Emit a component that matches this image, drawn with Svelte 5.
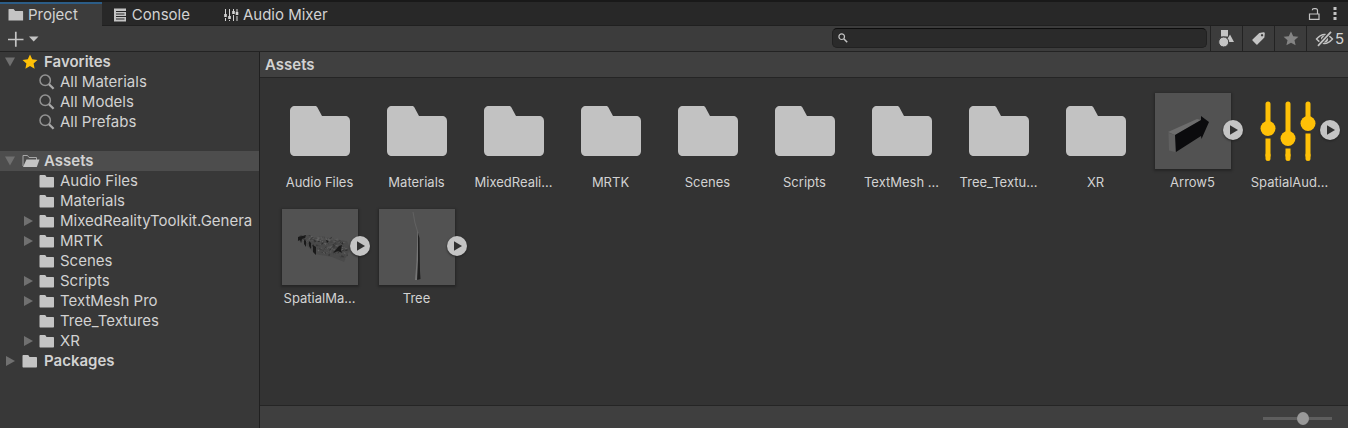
<script>
  const favorites = ['All Materials', 'All Models', 'All Prefabs'];
  const folders = [
    { name: 'Audio Files' },
    { name: 'Materials' },
    { name: 'MixedRealityToolkit.Genera', children: true },
    { name: 'MRTK', children: true },
    { name: 'Scenes' },
    { name: 'Scripts', children: true },
    { name: 'TextMesh Pro', children: true },
    { name: 'Tree_Textures' },
    { name: 'XR', children: true }
  ];
  const assets = [
    { label: 'Audio Files', kind: 'folder' },
    { label: 'Materials', kind: 'folder' },
    { label: 'MixedReali...', kind: 'folder' },
    { label: 'MRTK', kind: 'folder' },
    { label: 'Scenes', kind: 'folder' },
    { label: 'Scripts', kind: 'folder' },
    { label: 'TextMesh ...', kind: 'folder' },
    { label: 'Tree_Textu...', kind: 'folder' },
    { label: 'XR', kind: 'folder' },
    { label: 'Arrow5', kind: 'arrow' },
    { label: 'SpatialAud...', kind: 'mixer' },
    { label: 'SpatialMa...', kind: 'mesh' },
    { label: 'Tree', kind: 'tree' }
  ];

  // Triangulated rubble for the scanned-mesh preview, from a fixed seed.
  let seed = 7;
  const rnd = () => (seed = (seed * 16807) % 2147483647) / 2147483647;
  const shades = ['#2e2e2e', '#404040', '#5e5e5e', '#6a6a6a', '#222', '#707070', '#444'];
  const shards = Array.from({ length: 330 }, () => {
    const t = rnd();
    const x = 17 + t * 48;
    const y = 29 + t * 13 + (rnd() - 0.5) * (5 + Math.min(t * 2, 1) * 13);
    const p = () => `${(x + rnd() * 4 - 2).toFixed(1)},${(y + rnd() * 3 - 1.5).toFixed(1)}`;
    return { points: `${p()} ${p()} ${p()}`, fill: shades[Math.floor(rnd() * shades.length)] };
  });

  let query = $state('');
  let zoom = $state(60);
</script>

{#snippet smallFolder()}
  <svg class="icon" width="16" height="16" viewBox="0 0 16 16" aria-hidden="true">
    <path fill="#c4c4c4" d="M1.5 2h4.2c.5 0 .8.2 1 .6L7.5 4H14c.6 0 1 .4 1 1v8.500c0 .6-.4 1-1 1H1.500c-.6 0-1-.4-1-1V3c0-.6.4-1 1-1z" />
  </svg>
{/snippet}

{#snippet lens()}
  <svg class="icon" width="16" height="16" viewBox="0 0 16 16" aria-hidden="true">
    <circle cx="6.200" cy="6.300" r="5.200" fill="none" stroke="#929292" stroke-width="1.500" />
    <path d="M10 10.200l4.600 4.600" stroke="#aaa" stroke-width="2.300" />
  </svg>
{/snippet}

{#snippet fold(open)}
  <svg class="fold" width="10" height="10" viewBox="0 0 10 10" aria-hidden="true">
    <path fill="#707070" d={open ? 'M0 .5h10L5 9.500z' : 'M1 0v10L10 5z'} />
  </svg>
{/snippet}

<main class="window">
  <div class="tabs">
    <button class="tab active">
      <svg width="16" height="16" viewBox="0 0 16 16" aria-hidden="true"><path fill="#c4c4c4" d="M1 2h4.600l1.600 2H14.600c.3 0 .5.2.5.5v9H.5v-11c0-.3.2-.5.5-.5z" /></svg>
      Project
    </button>
    <button class="tab">
      <svg width="16" height="16" viewBox="0 0 16 16" aria-hidden="true"><rect x="2" y="1.500" width="12" height="13" fill="#c4c4c4" /><path stroke="#282828" d="M4 4.500h10M4 7h8.500M4 9.500h10M4 12h8.500" /></svg>
      Console
    </button>
    <button class="tab">
      <svg width="16" height="16" viewBox="0 0 16 16" aria-hidden="true"><path stroke="#d2d2d2" d="M2.500 2v5M2.500 11v3M6.500 2v7M6.500 13v1M10.500 2v2M10.500 8v6M14 2v3M14 9v5" /><path stroke="#d2d2d2" stroke-width="2.600" d="M2.500 7v3M6.500 9v3M10.500 4v3M14 5v3" /></svg>
      Audio Mixer
    </button>
    <div class="window-tools">
      <button class="plain" aria-label="Lock">
        <svg width="14" height="14" viewBox="0 0 14 14" aria-hidden="true"><path fill="none" stroke="#c4c4c4" stroke-width="1.200" d="M1.500 7h9.500v5.400H1.500zM9.500 7V3.500Q9.500 1.600 7.500 1.600H6Q4.300 1.600 4.300 3.200" /></svg>
      </button>
      <button class="plain" aria-label="More">
        <svg width="6" height="14" viewBox="0 0 6 14" aria-hidden="true"><path fill="#c4c4c4" d="M1.500 0h3v3h-3zM1.500 5h3v3h-3zM1.500 10h3v3h-3z" /></svg>
      </button>
    </div>
  </div>

  <div class="toolbar">
    <button class="plain create" aria-label="Create">
      <svg width="32" height="16" viewBox="0 0 32 16" aria-hidden="true"><path stroke="#c4c4c4" stroke-width="1.700" d="M0 8.500h15.500M7.800.8v15" /><path fill="#c4c4c4" d="M21 5.500h9.500L25.700 10.500z" /></svg>
    </button>
    <label class="search">
      <svg width="10" height="10" viewBox="0 0 10 10" aria-hidden="true"><circle cx="3.700" cy="3.700" r="2.800" fill="none" stroke="#c4c4c4" stroke-width="1.200" /><path d="M5.700 5.700l3.500 3.500" stroke="#c4c4c4" stroke-width="1.500" /></svg>
      <input type="text" aria-label="Search assets" bind:value={query} />
    </label>
    <div class="filters">
      <button class="filter" aria-label="Search by type">
        <svg width="18" height="18" viewBox="0 0 18 18" aria-hidden="true"><path fill="#c4c4c4" d="M3 0h7v6.500H3zM12 4.500l4 7.500h-5L9.500 8.800z" /><circle cx="5.700" cy="12" r="5" fill="#c4c4c4" stroke="#3c3c3c" /></svg>
      </button>
      <button class="filter" aria-label="Search by label">
        <svg width="16" height="16" viewBox="0 0 16 16" aria-hidden="true"><path fill="#c4c4c4" fill-rule="evenodd" d="M8.300 2l4.200-.8c.7 0 1.300.5 1.300 1.200l-.4 4-7 7q-.5.5-1 0L1.500 9.500q-.5-.5 0-1zM11 3a1.200 1.200 0 1 0 .1 0z" /></svg>
      </button>
      <button class="filter" aria-label="Save search">
        <svg width="16" height="16" viewBox="0 0 16 16" aria-hidden="true"><path fill="#848484" d="M8 .4l2.200 4.800 5.200.5-3.900 3.500 1.100 5.100L8 11.700l-4.600 2.600 1.100-5.100L.6 5.700l5.200-.5z" /></svg>
      </button>
      <button class="filter hidden-count" aria-label="Hidden packages: 5">
        <svg width="20" height="16" viewBox="0 0 20 16" aria-hidden="true"><path fill="none" stroke="#c4c4c4" stroke-width="1.400" d="M1.500 8Q5.500 3.500 9.500 3.500T17.500 8Q13.500 12.500 9.500 12.500T1.500 8z" /><circle cx="9.500" cy="8" r="3.600" fill="#c4c4c4" /><path stroke="#3c3c3c" stroke-width="4" d="M3.500 14.500L15.500 1" /><path stroke="#c4c4c4" stroke-width="1.700" d="M3 14.800L16 .8" /></svg>
        <span>5</span>
      </button>
    </div>
  </div>

  <div class="body">
    <nav class="sidebar" aria-label="Project folders">
      <button class="row root">
        {@render fold(true)}
        <svg class="icon" width="16" height="16" viewBox="0 0 16 16" aria-hidden="true"><path fill="#ffc107" d="M8 .5l2.200 4.800 5.300.6-3.900 3.600 1 5.200L8 12.100l-4.600 2.600 1-5.200L.5 5.900l5.300-.6z" /></svg>
        <span>Favorites</span>
      </button>
      {#each favorites as name}
        <button class="row child"><span class="fold"></span>{@render lens()}<span>{name}</span></button>
      {/each}

      <button class="row root selected">
        {@render fold(true)}
        <svg class="icon wide" width="18" height="16" viewBox="0 0 18 16" aria-hidden="true"><path fill="none" stroke="#a8a8a8" d="M1 13V2.500h4.500L7 4.500h7.500V7" /><path fill="#c4c4c4" d="M4.500 6.500H17.500L14.800 14H1z" /></svg>
        <span>Assets</span>
      </button>
      {#each folders as f}
        <button class="row child">
          {#if f.children}{@render fold(false)}{:else}<span class="fold"></span>{/if}
          {@render smallFolder()}<span>{f.name}</span>
        </button>
      {/each}
      <button class="row root">{@render fold(false)}{@render smallFolder()}<span>Packages</span></button>
    </nav>

    <section class="browser">
      <h1>Assets</h1>
      <div class="grid">
        {#each assets as a}
          <button class="asset">
            <span class="thumb" class:preview={['arrow', 'mesh', 'tree'].includes(a.kind)}>
              <svg width="76" height="76" viewBox="0 0 76 76" aria-hidden="true">
                {#if a.kind === 'folder'}
                  <path fill="#c2c2c2" d="M13 13h20c1 0 1.700.3 2.300 1.200L40 23h23c3 0 5 2 5 5v30c0 3-2 5-5 5H13c-3 0-5-2-5-5V18c0-3 2-5 5-5z" />
                {:else if a.kind === 'arrow'}
                  <path fill="#6d6d6d" d="M13 39L42 26l4 1-26 15z" />
                  <path fill="#606060" d="M13.500 40l6.500 2v17l-6-1.500z" />
                  <path fill="#0b0b0d" d="M20 42l26-15V23l8 6-7.500 17-.5-3L21 59z" />
                {:else if a.kind === 'mixer'}
                  <g stroke="#ffc107" stroke-width="5" stroke-linecap="round">
                    <path d="M16 11v20M36 11v30M56 11v14" />
                    <path stroke-linecap="butt" d="M16 45.500v18M36 55.500v8M56 40.500v23" />
                    <path d="M16 62v3.500M36 62v3.500M56 62v3.500" />
                  </g>
                  <g fill="#ffc107"><circle cx="16" cy="35.500" r="7.500" /><circle cx="36" cy="45.500" r="7.500" /><circle cx="56" cy="30.500" r="7.500" /></g>
                {:else if a.kind === 'mesh'}
                  <path fill="#4a4a4a" d="M17 28l7-2 19 5 22 1 3 8-6 13-12-5-17-3-8-8z" />
                  <g opacity=".75">
                    {#each shards as s}<polygon points={s.points} fill={s.fill} />{/each}
                  </g>
                  <path fill="#1a1a1a" d="M16 28l8-2-1 3-3 1-1 4-1-3-2 1zM22 31l2 1v6l-2-3zM27 32l2 2v6l-2-3zM31 36l3 2v8l-3-3zM51 44l6-7 3-1-1 5 1 3-4-2zM44 31l3 1-2 2z" />
                {:else}
                  <path fill="none" stroke="#666" stroke-width=".8" d="M34 3l2 11 3 10" />
                  <path fill="#757575" d="M38.500 22l.7 3L39 71h-3l1.500-18z" />
                  <path fill="#202020" d="M39 24l1.500 5 .5 33 .5 8-3.500 1 1-20z" />
                {/if}
              </svg>
              {#if a.kind !== 'folder'}
                <svg class="badge" width="20" height="20" viewBox="0 0 20 20" aria-hidden="true"><circle cx="10" cy="10" r="10" fill="#c4c4c4" /><path fill="#303030" d="M7 5.200v9.600L15 10z" /></svg>
              {/if}
            </span>
            <span class="label">{a.label}</span>
          </button>
        {/each}
      </div>
      <footer>
        <input type="range" min="0" max="100" aria-label="Icon size" bind:value={zoom} />
      </footer>
    </section>
  </div>
</main>

<style>
  :global(body) { margin: 0; background: #383838; }
  .window {
    display: flex;
    flex-direction: column;
    box-sizing: border-box;
    min-height: 100vh;
    border-top: 2px solid #191919;
    background: #383838;
    color: #d2d2d2;
    font: 15px/20px Inter, sans-serif;
  }
  button, input { font: inherit; color: inherit; }
  button { border: 0; margin: 0; padding: 0; background: none; }
  svg { display: block; flex: none; }

  .tabs { display: flex; height: 24px; background: #282828; }
  .tab {
    display: flex;
    align-items: center;
    gap: 4px;
    padding: 2px 23px 0 10px;
    border-bottom: 1px solid #202020;
  }
  .tab.active {
    padding: 0 24px 0 8px;
    background: #3c3c3c;
    border-top: 2px solid #2c5d87;
    border-bottom: 0;
  }
  .window-tools {
    display: flex;
    flex: 1;
    align-items: center;
    justify-content: flex-end;
    gap: 10px;
    padding-right: 10px;
    border-bottom: 1px solid #202020;
  }

  .toolbar { display: flex; height: 25px; background: #3c3c3c; border-bottom: 1px solid #232323; }
  .create { padding-left: 8px; margin-right: auto; }
  .search {
    display: flex;
    align-items: center;
    box-sizing: border-box;
    width: 375px;
    height: 20px;
    margin: 2px 3px 0 0;
    padding-left: 5px;
    gap: 4px;
    border: 1px solid #212121;
    border-top-color: #0d0d0d;
    border-radius: 5px;
    background: #2a2a2a;
  }
  .search input { flex: 1; min-width: 0; border: 0; padding: 0; background: none; outline: 0; height: 16px; }
  .filters { display: flex; }
  .filter {
    display: flex;
    align-items: center;
    justify-content: center;
    box-sizing: border-box;
    width: 32px;
    border-left: 1px solid #232323;
  }
  .hidden-count { width: 42px; justify-content: flex-end; padding-right: 4px; }

  .body { display: flex; flex: 1; }
  .sidebar {
    display: flex;
    flex-direction: column;
    box-sizing: border-box;
    width: 260px;
    flex: none;
    overflow: hidden;
    border-right: 1px solid #202020;
  }
  .row { display: flex; align-items: center; height: 20px; white-space: nowrap; text-align: left; }
  .root { padding-left: 5px; font-weight: 600; }
  .root .icon { margin: 0 6px 0 7px; }
  .root .wide { margin-right: 4px; }
  .child { padding-left: 23px; }
  .child .icon { margin: 0 5px 0 6px; }
  .fold { width: 10px; flex: none; }
  .selected { margin-top: 19px; background: #4d4d4d; }

  .browser { display: flex; flex: 1; flex-direction: column; min-width: 0; background: #333; }
  h1 {
    margin: 0;
    padding: 3px 5px 2px;
    font-size: 15px;
    font-weight: 600;
    background: #404040;
    border-bottom: 1px solid #252525;
  }
  .grid {
    display: grid;
    flex: 1;
    grid-template-columns: repeat(auto-fill, 97px);
    align-content: start;
    row-gap: 19px;
    padding: 15px 0 0 11px;
  }
  .asset { display: flex; flex-direction: column; align-items: center; gap: 5px; }
  .thumb { position: relative; }
  .preview { background: #525252; box-shadow: 0 1px 2px 1px #262626; }
  .badge { position: absolute; top: 27px; right: -12px; filter: drop-shadow(0 1px 1px #222); }
  .label { font-size: 13px; line-height: 16px; white-space: nowrap; }

  footer {
    display: flex;
    align-items: center;
    justify-content: flex-end;
    height: 22px;
    padding-right: 16px;
    border-top: 1px solid #252525;
    background: #3f3f3f;
  }
  input[type='range'] { appearance: none; width: 69px; height: 14px; margin: 2px 0 0; background: none; }
  input[type='range']::-webkit-slider-runnable-track { height: 3px; background: #5e5e5e; }
  input[type='range']::-webkit-slider-thumb {
    appearance: none;
    width: 12px;
    height: 13px;
    margin-top: -5px;
    border-radius: 50%;
    background: #999;
  }
</style>
